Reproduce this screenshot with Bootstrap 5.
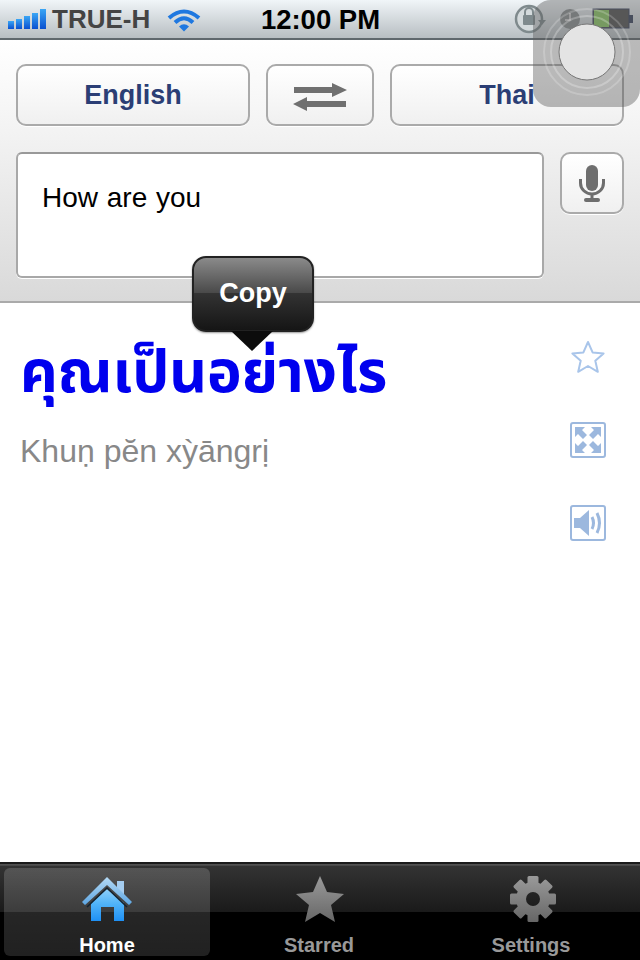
<!DOCTYPE html>
<html lang="en">
<head>
<meta charset="UTF-8">
<title>Translate</title>
<link rel="stylesheet" href="https://cdn.jsdelivr.net/npm/bootstrap@5.3.0/dist/css/bootstrap.min.css">
<style>
html, body { height: 960px; overflow: hidden; }
body { font-family: "Liberation Sans", Arial, sans-serif; background: #fff; position: relative; }
.phone-shell { height: 960px; }

.status-strip { height: 40px; background: linear-gradient(#f0f5f8, #b7bec2); border-bottom: 2px solid #5f686d; padding-left: 8px; }
.carrier { font-size: 26px; font-weight: 700; color: #444; line-height: 1; margin-left: 6px; }
.wifi-mark { margin-left: 17px; }
.clock { position: absolute; left: 1px; right: 0; top: 4px; text-align: center; font-size: 27.500px; font-weight: 700; color: #000; line-height: 32px; }

.control-pane { height: 263px; background: linear-gradient(#fff 0, #f3f3f3 35%, #d9d9d9 100%); border-bottom: 2px solid #aaa; padding: 24px 16px 0; }
.soft-btn { background: linear-gradient(#fff, #f0f0f0); border: 2px solid #aaa; border-radius: 10px; box-shadow: 0 1px 0 #fff; height: 62px; color: #2b3e75; font-size: 27px; font-weight: 700; padding: 0; }
.lang-btn { width: 234px; }
.swap-btn { width: 108px; }
.mic-btn { width: 64px; }
.input-row { margin-top: 26px; }
.source-box { width: 528px; height: 126px; background: #fff; border: 2px solid #a8a8a8; border-top-color: #999; border-radius: 6px; padding: 26px 24px; font-size: 28px; line-height: 36px; word-spacing: 1px; color: #000; box-shadow: 0 1px 0 #fff; }

.copy-pop { position: absolute; left: 192px; top: 256px; width: 122px; height: 76px; border-radius: 14px; border: 2px solid #222; background: linear-gradient(#8a8a8a 0, #4a4a4a 48%, #333 49%, #151515 100%); color: #fff; font-size: 27px; font-weight: 700; text-align: center; line-height: 70px; box-shadow: 0 1px 2px rgba(0,0,0,.4); }
.copy-tip { position: absolute; left: 231px; top: 331px; width: 0; height: 0; border-left: 21px solid transparent; border-right: 21px solid transparent; border-top: 20px solid #0c0c0c; }

.result-pane { height: 559px; padding: 0 34px 0 20px; }
.thai-line { font-family: "Noto Sans Thai", "Noto Sans", "DejaVu Sans", sans-serif; font-size: 58.500px; font-weight: 700; color: #0000ee; line-height: 70px; padding-top: 36px; height: 106px; white-space: nowrap; }
.roman-line { font-size: 32px; color: #888; line-height: 36px; margin-top: 24px; }
.side-tools { width: 36px; gap: 47px; padding-top: 36px; }

.tab-strip { height: 98px; background: linear-gradient(#1b1b1b 0, #1b1b1b 2px, #555 2px, #444 4px, #333 4px, #1a1a1a 50px, #000 50px); padding: 6px 1px 4px; }
.tab-cell { width: 212px; height: 88px; border-radius: 6px; color: #999; font-size: 20px; font-weight: 700; line-height: 1; }
.tab-cell.is-on { width: 206px; margin: 0 3px; background: linear-gradient(rgba(255,255,255,.17), rgba(255,255,255,.13)); color: #fff; }
.tab-cell svg { display: block; margin-top: 8px; margin-bottom: 13px; }
.gear-mark { position: relative; left: 2px; }
.star-mark { position: relative; left: 1px; }

.touch-float { position: absolute; left: 533px; top: 0; width: 107px; height: 107px; background: rgba(90,90,90,.42); border-radius: 18px 0 18px 18px; }
.lock-mark { position: absolute; left: 513px; top: 4px; }
.dial-mark { position: absolute; left: 559px; top: 8px; }
.batt-mark { position: absolute; left: 592px; top: 8px; }
.float-rings { position: absolute; left: 533px; top: 0; }
</style>
</head>
<body>
<div class="phone-shell d-flex flex-column">
    <div class="status-strip d-flex align-items-center">
        <svg width="38" height="24" viewBox="0 0 38 24"><defs><linearGradient id="sig" x1="0" y1="0" x2="0" y2="1"><stop offset="0" stop-color="#3aa6f5"/><stop offset="1" stop-color="#0a50d0"/></linearGradient></defs><rect x="0" y="14" width="6" height="8" fill="url(#sig)"/><rect x="8" y="12" width="6" height="10" fill="url(#sig)"/><rect x="16" y="9" width="6" height="13" fill="url(#sig)"/><rect x="24" y="6" width="6" height="16" fill="url(#sig)"/><rect x="32" y="2" width="6" height="20" fill="url(#sig)"/></svg>
        <span class="carrier">TRUE-H</span>
        <svg class="wifi-mark" width="34" height="26" viewBox="0 0 34 26" fill="none" stroke="#1f78e0" stroke-width="4"><path d="M2 12 Q17 -1 32 12"/><path d="M8 16.500 Q17 8 26 16.500"/><path d="M17 25.500 L12 20.500 Q17 16 22 20.500 Z" fill="#1f78e0" stroke="none"/></svg>
    </div>
    <div class="clock">12:00 PM</div>

    <div class="control-pane">
        <div class="d-flex justify-content-between">
            <button class="soft-btn lang-btn">English</button>
            <button class="soft-btn swap-btn"><svg width="54" height="28" viewBox="0 0 54 28" fill="#707070"><path d="M1 4h38V0l15 7-15 7v-4H1z"/><path d="M53 18H14v-4L0 21l14 7v-4h39z"/></svg></button>
            <button class="soft-btn lang-btn">Thai</button>
        </div>
        <div class="input-row d-flex justify-content-between align-items-start">
            <div class="source-box">How are you</div>
            <button class="soft-btn mic-btn"><svg width="26" height="38" viewBox="0 0 26 38"><rect x="7" y="0" width="12" height="26" rx="6" fill="#6e6e6e"/><path d="M1.500 14v4a11.500 11 0 0 0 23 0v-4" fill="none" stroke="#6e6e6e" stroke-width="3"/><rect x="11.500" y="28" width="3" height="6" fill="#6e6e6e"/><rect x="5" y="33" width="16" height="4" rx="2" fill="#6e6e6e"/></svg></button>
        </div>
    </div>

    <div class="result-pane d-flex justify-content-between flex-grow-1">
        <div>
            <div class="thai-line">คุณเป็นอย่างไร</div>
            <div class="roman-line">Khuṇ pĕn xỳāngrị</div>
        </div>
        <div class="side-tools d-flex flex-column align-items-center">
            <svg width="34" height="36" viewBox="0 0 34 34" fill="#fff" stroke="#a9c5ea" stroke-width="2" stroke-linejoin="round"><path d="M17 2l4.600 10.400 11 1-8.300 7.400 2.500 11L17 26l-9.800 5.800 2.500-11-8.300-7.400 11-1z"/></svg>
            <svg width="36" height="36" viewBox="0 0 36 36"><rect x="1" y="1" width="34" height="34" rx="2" fill="#fff" stroke="#9cb8de" stroke-width="2"/><g fill="#9cb8de"><path d="M5 5h10l-3 3 5 5-4 4-5-5-3 3z"/><path d="M31 5H21l3 3-5 5 4 4 5-5 3 3z"/><path d="M5 31h10l-3-3 5-5-4-4-5 5-3-3z"/><path d="M31 31H21l3-3-5-5 4-4 5 5 3-3z"/></g></svg>
            <svg width="36" height="36" viewBox="0 0 36 36"><rect x="1" y="1" width="34" height="34" rx="2" fill="#fff" stroke="#9cb8de" stroke-width="2"/><path d="M4 13h6l9-8v26l-9-8H4z" fill="#9cb8de"/><path d="M22 12q3 6 0 12M27 8q5 10 0 20" fill="none" stroke="#9cb8de" stroke-width="3"/></svg>
        </div>
    </div>

    <div class="tab-strip d-flex">
        <div class="tab-cell is-on d-flex flex-column align-items-center">
            <svg width="52" height="46" viewBox="0 0 52 46"><defs><linearGradient id="hm" x1="0" y1="0" x2="0" y2="1"><stop offset="0" stop-color="#8fd0fa"/><stop offset=".45" stop-color="#52b4f8"/><stop offset="1" stop-color="#1e90f5"/></linearGradient><linearGradient id="rf" x1="0" y1="0" x2="0" y2="1"><stop offset="0" stop-color="#b5daf5"/><stop offset="1" stop-color="#5ea6e2"/></linearGradient></defs><path d="M36 5h7v14l-7-6z" fill="#a5cdf0"/><path d="M10 27L26 13l17 14v18H33V31H20v14H10z" fill="url(#hm)"/><path d="M6 31L26 12l20 19" fill="none" stroke="#14222e" stroke-width="1.500"/><path d="M1 26L26 1l25 25-3 3L26 9 4 29z" fill="url(#rf)"/></svg>
            <span>Home</span>
        </div>
        <div class="tab-cell d-flex flex-column align-items-center">
            <svg class="star-mark" width="48" height="46" viewBox="0 0 48 46"><defs><linearGradient id="gy" x1="0" y1="0" x2="0" y2="1"><stop offset="0" stop-color="#9a9a9a"/><stop offset="1" stop-color="#666"/></linearGradient></defs><path d="M24 0l7 16 17 2-13 11 4 17-15-9-15 9 4-17L0 18l17-2z" fill="url(#gy)"/></svg>
            <span>Starred</span>
        </div>
        <div class="tab-cell d-flex flex-column align-items-center">
            <svg class="gear-mark" width="46" height="46" viewBox="-23 -23 46 46"><defs><linearGradient id="gz" x1="0" y1="0" x2="0" y2="1"><stop offset="0" stop-color="#9a9a9a"/><stop offset="1" stop-color="#666"/></linearGradient><mask id="gm"><circle r="17" fill="#fff"/><g fill="#fff"><rect x="-5.500" y="-23" width="11" height="46" rx="1.500"/><rect x="-5.500" y="-23" width="11" height="46" rx="1.500" transform="rotate(45)"/><rect x="-5.500" y="-23" width="11" height="46" rx="1.500" transform="rotate(90)"/><rect x="-5.500" y="-23" width="11" height="46" rx="1.500" transform="rotate(135)"/></g><circle r="7" fill="#000"/></mask></defs><rect x="-23" y="-23" width="46" height="46" fill="url(#gz)" mask="url(#gm)"/></svg>
            <span>Settings</span>
        </div>
    </div>
</div>

<div class="copy-pop">Copy</div>
<div class="copy-tip"></div>

<svg class="lock-mark" width="36" height="30" viewBox="0 0 36 30"><circle cx="16" cy="15" r="13" fill="#d4dadc" stroke="#7f8a8d" stroke-width="2.500"/><rect x="10" y="11" width="12" height="10" rx="1" fill="#7f8a8d"/><path d="M12 11V8a4 4 0 0 1 8 0v3" fill="none" stroke="#7f8a8d" stroke-width="2"/><path d="M25 16h8l-4 5z" fill="#7f8a8d"/></svg>
<svg class="dial-mark" width="22" height="22" viewBox="0 0 22 22"><circle cx="11" cy="11" r="10" fill="#8a8f91"/><path d="M11 5v7H6" stroke="#ddd" stroke-width="1.500" fill="none"/></svg>
<svg class="batt-mark" width="42" height="22" viewBox="0 0 42 22"><rect x="1" y="1" width="36" height="19" fill="#555" stroke="#3c4560"/><rect x="2" y="2" width="15" height="17" fill="#8cc866"/><rect x="37" y="7" width="4" height="8" fill="#3c4560"/></svg>

<div class="touch-float"></div>
<svg class="float-rings" width="107" height="107" viewBox="0 0 107 107"><circle cx="54" cy="52" r="43" fill="none" stroke="#fff" stroke-opacity=".2" stroke-width="2"/><circle cx="54" cy="52" r="36" fill="none" stroke="#fff" stroke-opacity=".25" stroke-width="2"/><circle cx="54" cy="52" r="28" fill="#e4e4e4" stroke="#777" stroke-width="1"/></svg>
</body>
</html>
